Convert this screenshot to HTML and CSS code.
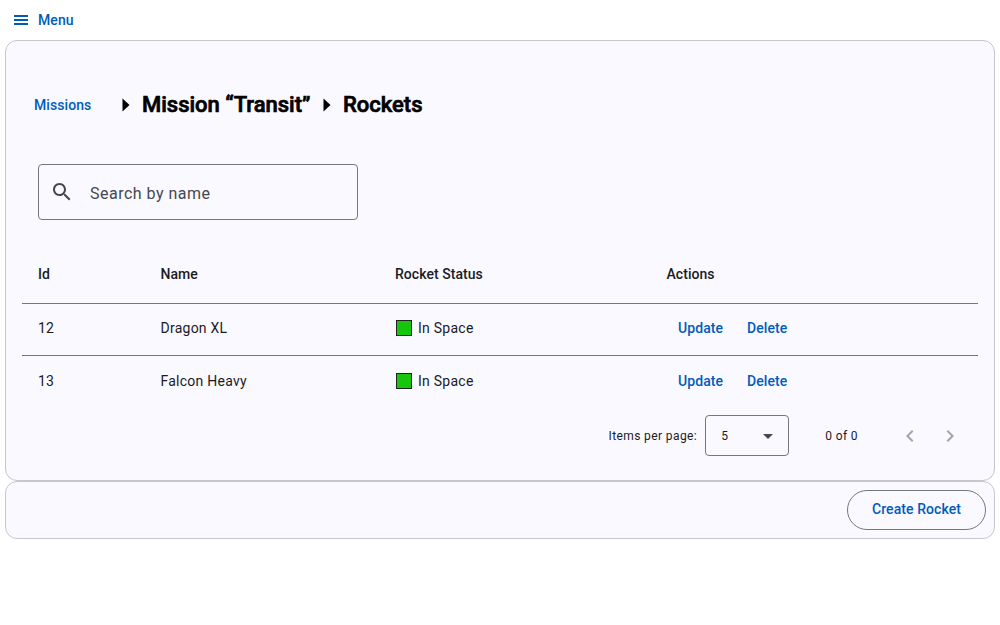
FILE: index.html
```html
<!DOCTYPE html>
<html lang="en">
<head>
<meta charset="utf-8">
<title>Rockets</title>
<link rel="stylesheet" href="styles.css">
</head>
<body>
<header class="topbar">
  <button class="link menu"><svg class="menu-icon" width="14" height="10" viewBox="0 0 14 10" fill="currentColor"><path d="M0 0h14v2H0zM0 4h14v2H0zM0 8h14v2H0z"/></svg>Menu</button>
</header>
<main class="card main">
  <nav class="crumbs">
    <button class="link">Missions</button>
    <svg class="caret first" width="8" height="14" viewBox="0 0 8 14"><path d="M.5 .5l7 6.5-7 6.5z"/></svg>
    <h2 class="title mission">Mission “Transit”</h2>
    <svg class="caret second" width="8" height="14" viewBox="0 0 8 14"><path d="M.5 .5l7 6.5-7 6.5z"/></svg>
    <h2 class="title rockets">Rockets</h2>
  </nav>
  <label class="search">
    <svg class="search-icon" width="24" height="24" viewBox="0 0 24 24" fill="currentColor"><path d="M15.5 14h-.79l-.28-.27C15.41 12.59 16 11.11 16 9.5 16 5.91 13.09 3 9.5 3S3 5.91 3 9.5 5.91 16 9.5 16c1.61 0 3.09-.59 4.23-1.57l.27.28v.79l5 4.99L20.49 19l-4.99-5zm-6 0C7.01 14 5 11.99 5 9.5S7.01 5 9.5 5 14 7.01 14 9.5 11.99 14 9.5 14z"/></svg>
    <span>Search by name</span>
  </label>
  <section class="table">
    <div class="row head"><span>Id</span><span>Name</span><span>Rocket Status</span><span>Actions</span></div>
    <div class="row">
      <span>12</span><span>Dragon XL</span>
      <span class="status"><i class="swatch"></i>In Space</span>
      <span class="actions"><button class="link">Update</button><button class="link">Delete</button></span>
    </div>
    <div class="row last">
      <span>13</span><span>Falcon Heavy</span>
      <span class="status"><i class="swatch"></i>In Space</span>
      <span class="actions"><button class="link">Update</button><button class="link">Delete</button></span>
    </div>
  </section>
  <footer class="paginator">
    <span class="per-page">Items per page:</span>
    <div class="select"><span>5</span><svg width="10" height="5" viewBox="0 0 10 5"><path d="M0 0h10L5 5z" fill="#44474e"/></svg></div>
    <span class="range">0 of 0</span>
    <svg class="page-icon" width="24" height="24" viewBox="0 0 24 24"><path d="M15.41 7.41L14 6l-6 6 6 6 1.41-1.41L10.83 12z"/></svg>
    <svg class="page-icon" width="24" height="24" viewBox="0 0 24 24"><path d="M10 6L8.59 7.41 13.17 12l-4.58 4.59L10 18l6-6z"/></svg>
  </footer>
</main>
<section class="card bottom">
  <button class="link create">Create Rocket</button>
</section>
</body>
</html>
```
FILE: styles.css
```css
* { box-sizing: border-box; }
body {
  margin: 0;
  padding: 0 5px;
  background: #fff;
  color: #1a1b1f;
  font: 14px/20px Roboto, "Liberation Sans", sans-serif;
  letter-spacing: 0.25px;
}
.link {
  border: 0;
  padding: 0;
  background: none;
  color: #005cbb;
  font: 500 14px/20px Roboto, sans-serif;
  letter-spacing: 0.07px;
}
.topbar { display: flex; align-items: center; height: 40px; padding-left: 9px; }
.menu { display: flex; align-items: center; }
.menu-icon { margin-right: 10px; }
.card { border: 1px solid #c4c6d0; border-radius: 12px; background: #faf9ff; }
.main { height: 441px; padding: 0 16px 16px; }
.crumbs { display: flex; align-items: center; height: 123px; padding: 5px 0 0 12px; }
.crumbs .link { width: 58px; text-align: left; }
.caret { fill: #000; }
.caret.first { margin-left: 30px; }
.title {
  flex: none;
  margin: 0;
  color: #000;
  font-size: 22px;
  line-height: 28px;
  font-weight: 500;
  letter-spacing: 0;
  -webkit-text-stroke: 0.7px #000;
}
.mission { width: 181px; margin-left: 12px; }
.rockets { margin-left: 12px; }
.search {
  display: flex;
  align-items: center;
  width: 320px;
  height: 56px;
  margin: 0 16px 28px;
  padding: 4px 11px 0;
  border: 1px solid #74777f;
  border-radius: 4px;
  color: #44474e;
  font-size: 16px;
  line-height: 24px;
  letter-spacing: 0.49px;
}
.search-icon { margin: -4px 16px 0 0; }
.row {
  display: grid;
  grid-template-columns: 122.5px 234.5px 271.5px 1fr;
  align-items: center;
  height: 52px;
  padding: 0 0 3px 16px;
  border-bottom: 1px solid #74777f;
}
.head { height: 56px; font-weight: 500; letter-spacing: 0.05px; }
.last { border-bottom: 0; padding-bottom: 2px; }
.status { display: flex; align-items: center; }
.swatch { width: 16px; height: 16px; margin: 0 6px 0 1px; border: 1px solid #222; background: #16c60c; }
.actions { display: flex; gap: 24px; padding-left: 11.5px; }
.paginator {
  display: flex;
  align-items: center;
  justify-content: flex-end;
  height: 56px;
  padding-right: 16px;
  font-size: 12px;
  line-height: 16px;
  letter-spacing: 0.4px;
}
.select {
  display: flex;
  align-items: center;
  justify-content: space-between;
  width: 84px;
  height: 41px;
  margin: 0 36px 1px 8px;
  padding: 1px 15px 0;
  border: 1px solid #74777f;
  border-radius: 4px;
}
.range { margin-right: 40px; }
.page-icon { fill: #1a1b1f; opacity: 0.38; }
.page-icon + .page-icon { margin-left: 16px; }
.bottom { display: flex; justify-content: flex-end; height: 58px; padding: 8px; }
.create { width: 139px; height: 40px; padding-bottom: 2px; border: 1px solid #74777f; border-radius: 20px; }
```
